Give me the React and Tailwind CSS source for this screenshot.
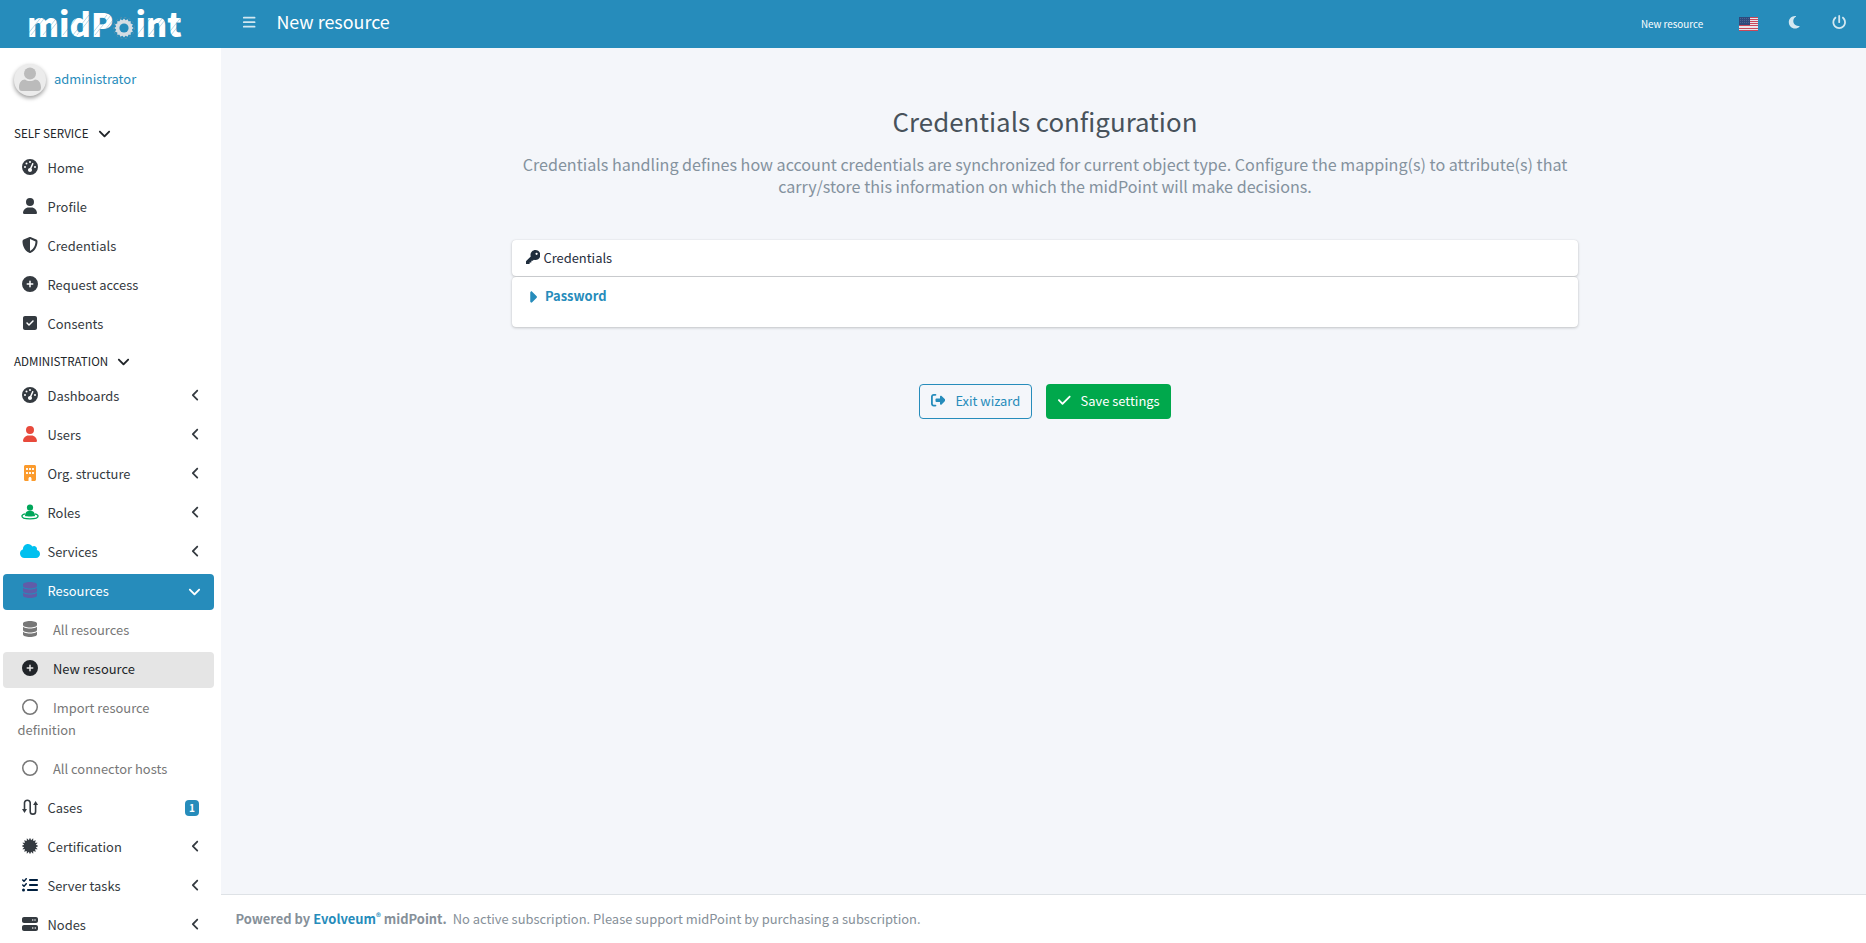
import React from "react";
import {
  FaAngleDown, FaAngleLeft, FaBars, FaBuilding, FaCaretRight, FaCheck, FaCirclePlus,
  FaCloud, FaDatabase, FaGaugeHigh, FaKey, FaListCheck, FaMoon, FaPowerOff, FaRegCircle,
  FaRightFromBracket, FaServer, FaShieldHalved, FaSquareCheck, FaUser,
} from "react-icons/fa6";

function RoleIcon({ className }) {
  return (
    <svg viewBox="0 0 18 16" className={className} fill="currentColor">
      <circle cx="9" cy="3.6" r="3.1" />
      <path d="M4 12c0-3 1.6-4.9 3.6-4.9h2.8c2 0 3.6 1.9 3.6 4.9-1.4.6-8.6.6-10 0z" />
      <path
        d="M4 9.9C2 10.4.9 11.1.9 12c0 1.7 3.6 2.9 8.100 2.900s8.100-1.200 8.100-2.900c0-.9-1.100-1.600-3.100-2.100"
        fill="none"
        stroke="currentColor"
        strokeWidth="1.3"
      />
    </svg>
  );
}

function CaseIcon({ className }) {
  return (
    <svg viewBox="0 0 16 16" className={className} fill="none" stroke="currentColor" strokeWidth="1.6">
      <path d="M2.500 12V3.600a2.900 2.900 0 0 1 5.700 0v8.800a2.700 2.700 0 0 0 5.400 0V4" />
      <path d="M0 10h5L2.500 14zM11.100 6h5L13.600 2z" fill="currentColor" stroke="none" />
    </svg>
  );
}

function burst(points, cx, cy, outer, inner) {
  return Array.from({ length: points * 2 }, (_, i) => {
    const r = i % 2 ? inner : outer;
    const a = (Math.PI * i) / points - Math.PI / 2;
    return `${(cx + r * Math.cos(a)).toFixed(2)},${(cy + r * Math.sin(a)).toFixed(2)}`;
  }).join(" ");
}

function SealIcon({ className }) {
  return (
    <svg viewBox="0 0 16 16" className={className} fill="currentColor">
      <polygon points={burst(16, 8, 8, 8.300, 5.900)} />
    </svg>
  );
}

function Flag() {
  return (
    <svg viewBox="0 0 19 14" className="h-3.5 w-[19px]" shapeRendering="crispEdges">
      <rect width="19" height="14" fill="#e9e4ea" />
      {[0, 2, 4, 6, 8, 11, 13].map((y) => (
        <rect key={y} y={y} width="19" height="1" fill="#c9485a" />
      ))}
      <rect width="11" height="8" fill="#2f4a7c" />
      {[1, 3, 5].map((y) =>
        [1, 3, 5, 7, 9].map((x) => <rect key={`${x}-${y}`} x={x} y={y} width="1" height="1" fill="#4d6592" />)
      )}
    </svg>
  );
}

function Logo() {
  return (
    <div className="relative flex h-12 w-[221px] items-center pl-[27px] text-[32.6px] leading-[44px] font-black text-white">
      <span className="-mt-[3px]">midP</span>
      <svg viewBox="0 0 22 22" className="mt-[7px] h-[22px] w-[22px]">
        <circle cx="11" cy="11" r="10.500" fill="none" stroke="#6f92a8" strokeWidth=".8" strokeDasharray="2 2.500" />
        <polygon points={burst(16, 11, 11, 9.6, 8)} fill="#d5dde3" />
        <circle cx="11" cy="11" r="4.600" fill="#268cbb" />
      </svg>
      <span className="-mt-[3px]">int</span>
      <svg viewBox="0 0 154 26" className="absolute top-2.5 left-[29px] h-[26px] w-[154px]" stroke="#268cbb" strokeWidth=".6" opacity=".55">
        {[2, 6, 18, 22, 38, 48, 52, 66, 70, 76, 112, 124, 128, 142, 146].map((x) => (
          <path key={x} d={`M${x - 4} 25L${x + 12} 5`} />
        ))}
      </svg>
    </div>
  );
}

function Section({ children }) {
  return (
    <div className="flex h-[33px] items-start gap-2 pt-1 pl-3.5 text-[11.6px] leading-[22px] text-[#212529]">
      {children}
      <FaAngleDown className="mt-1 h-[15px] w-[15px]" />
    </div>
  );
}

function Item({ icon: Icon, color = "text-[#343a40]", size = "h-4 w-4", label, end, variant = "top" }) {
  const look = {
    top: "text-[#343a40]",
    open: "bg-[#268cbb] text-white",
    sub: "text-[#777777]",
    current: "bg-[#e5e5e5] text-[#212529]",
  }[variant];
  const gap = variant === "sub" || variant === "current" ? "mr-[10.5px]" : "mr-[5px]";
  return (
    <a className={`mb-[3px] ml-[3px] flex w-[211px] items-start rounded pt-1.5 pr-[15px] pb-2 pl-[14.5px] ${look}`}>
      <span className="grow leading-[22px]">
        <span className={`inline-flex h-4 w-[25px] items-center justify-center align-[-2px] ${gap}`}>
          <Icon className={`shrink-0 ${size} ${color}`} />
        </span>
        {label}
      </span>
      {end}
    </a>
  );
}

const left = <FaAngleLeft className="mt-[3px] -mr-px h-[14.4px] w-[9px] shrink-0" />;

export default function App() {
  return (
    <div className="flex h-[943px] w-full flex-col overflow-hidden bg-white font-['Noto_Sans_CJK_SC','Noto_Sans',sans-serif] text-[12.93px]">
      <header className="flex h-12 shrink-0 items-center bg-[#268cbb] text-white">
        <Logo />
        <FaBars className="-mt-1 ml-[21px] h-[14.4px] w-[14.4px] opacity-80" />
        <h1 className="-mt-1.5 ml-5 text-[17.9px] leading-6">New resource</h1>
        <span className="mr-[36px] ml-auto text-[9.83px] leading-4">New resource</span>
        <Flag />
        <FaMoon className="-mt-1 mr-[30px] ml-[29px] h-[14.4px] w-[14.4px] opacity-80" />
        <FaPowerOff className="-mt-1 mr-[20px] h-[14.4px] w-[14.4px] opacity-80" />
      </header>
      <div className="flex min-h-0 grow">
        <aside className="w-[221px] shrink-0 overflow-hidden">
          <div className="flex h-[70px] items-start gap-2 pt-4 pl-3.5">
            <svg viewBox="0 0 32 32" className="h-8 w-8 rounded-full bg-[#ececec] shadow-[0_2px_4px_rgba(0,0,0,0.4)]" fill="#bbbbbb">
              <circle cx="16" cy="9.500" r="6" />
              <path d="M5 23.500c0-5 2.500-8 6-8 1.500 1.300 3 1.600 5 1.600s3.500-.3 5-1.600c3.500 0 6 3 6 8 0 2.500-1 3.500-3 3.500H8c-2 0-3-1-3-3.500z" />
            </svg>
            <a className="mt-1 leading-[22px] text-[#268cbb]">administrator</a>
          </div>
          <Section>SELF SERVICE</Section>
          <Item icon={FaGaugeHigh} label="Home" />
          <Item icon={FaUser} label="Profile" />
          <Item icon={FaShieldHalved} label="Credentials" />
          <Item icon={FaCirclePlus} label="Request access" />
          <Item icon={FaSquareCheck} label="Consents" />
          <Section>ADMINISTRATION</Section>
          <Item icon={FaGaugeHigh} label="Dashboards" end={left} />
          <Item icon={FaUser} color="text-[#e84a3c]" label="Users" end={left} />
          <Item icon={FaBuilding} color="text-[#fb9b2d]" label="Org. structure" end={left} />
          <Item icon={RoleIcon} color="text-[#00a65a]" size="h-4 w-[18px]" label="Roles" end={left} />
          <Item icon={FaCloud} color="text-[#00c0ef]" size="h-4 w-5" label="Services" end={left} />
          <Item
            icon={FaDatabase}
            color="text-[#605ca8]"
            label="Resources"
            variant="open"
            end={<FaAngleDown className="mt-[4px] -mr-[3px] h-[15px] w-[15px] shrink-0" />}
          />
          <Item icon={FaDatabase} color="text-[#777777]" label="All resources" variant="sub" />
          <Item icon={FaCirclePlus} color="text-[#212529]" label="New resource" variant="current" />
          <Item icon={FaRegCircle} color="text-[#777777]" label="Import resource definition" variant="sub" />
          <Item icon={FaRegCircle} color="text-[#777777]" label="All connector hosts" variant="sub" />
          <Item
            icon={CaseIcon}
            label="Cases"
            end={
              <span className="mt-[3px] h-4 w-3.5 shrink-0 rounded bg-[#268cbb] text-center text-[10px] leading-4 font-bold text-white">
                1
              </span>
            }
          />
          <Item icon={SealIcon} label="Certification" end={left} />
          <Item icon={FaListCheck} color="text-[#001f3f]" label="Server tasks" end={left} />
          <Item icon={FaServer} label="Nodes" end={left} />
        </aside>
        <div className="flex grow flex-col bg-[#f4f6fa]">
          <main className="flex grow flex-col items-center pt-14 pl-[3px]">
            <h2 className="text-[25.85px] leading-[34px] text-[#48525b]">Credentials configuration</h2>
            <p className="mt-[15px] w-[1066px] px-2 text-center text-[16.13px] leading-[22px] text-[#84929e]">
              Credentials handling defines how account credentials are synchronized for current object type. Configure the
              mapping(s) to attribute(s) that carry/store this information on which the midPoint will make decisions.
            </p>
            <section className="mt-[43px] flex w-[1066px] flex-col gap-px text-[#1f2d3d]">
              <div className="flex h-9 items-center gap-[3px] rounded bg-white pl-3.5 shadow-[0_0_1px_rgba(0,0,0,0.13),0_1px_3px_rgba(0,0,0,0.2)]">
                <FaKey className="-mt-0.5 h-[14.4px] w-[14.4px]" />
                <span className="leading-[22px]">Credentials</span>
              </div>
              <div className="flex h-[50px] items-start rounded bg-white pt-2 pl-[15px] font-bold text-[#268cbb] shadow-[0_0_1px_rgba(0,0,0,0.13),0_1px_3px_rgba(0,0,0,0.2)]">
                <FaCaretRight className="mt-[3px] h-[18px] w-[11px]" />
                <span className="ml-[7px] leading-[22px]">Password</span>
              </div>
            </section>
            <div className="mt-[57px] flex gap-3.5">
              <button className="flex h-[35px] w-[113px] items-center rounded border border-[#268cbb] pl-[11px] text-[#268cbb]">
                <FaRightFromBracket className="-mt-[3px] h-[14.4px] w-[14.4px]" />
                <span className="-mt-0.5 ml-2.5 leading-5">Exit wizard</span>
              </button>
              <button className="flex h-[35px] w-[125px] items-center rounded bg-[#00a84c] pl-[12px] text-white">
                <FaCheck className="-mt-0.5 h-[14.4px] w-[12.6px]" />
                <span className="-mt-0.5 ml-2.5 leading-5">Save settings</span>
              </button>
            </div>
          </main>
          <footer className="flex h-[49px] shrink-0 items-start border-t border-[#dee2e6] bg-white pt-[13px] pl-[14.5px] leading-[22px] whitespace-pre text-[#869099]">
            <strong>
              Powered by <span className="text-[#268cbb]">Evolveum<span className="align-[3px] text-[9.5px] leading-none">®</span></span> midPoint.
            </strong>
            <span className="ml-[6px]">No active subscription. Please support midPoint by purchasing a subscription.</span>
          </footer>
        </div>
      </div>
    </div>
  );
}
